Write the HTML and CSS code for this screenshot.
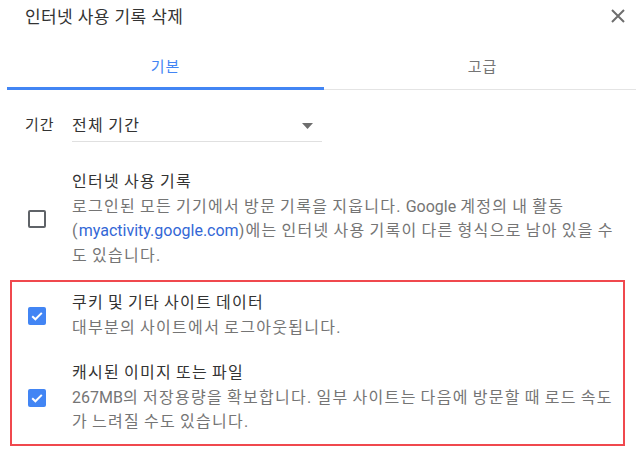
FILE: index.html
```html
<!DOCTYPE html>
<html lang="ko">
<head>
<meta charset="utf-8">
<title>인터넷 사용 기록 삭제</title>
<link rel="stylesheet" href="styles.css">
</head>
<body>
<div class="dialog">
  <header class="head">
    <h1 class="title">인터넷 사용 기록 삭제</h1>
    <button class="close" aria-label="닫기">
      <svg width="14" height="14" viewBox="0 0 14 14"><path d="M1 1L13 13M13 1L1 13" stroke="#6e6e6e" stroke-width="2" fill="none"/></svg>
    </button>
  </header>
  <nav class="tabs">
    <div class="tab active">기본</div>
    <div class="tab">고급</div>
  </nav>
  <div class="period">
    <span class="label">기간</span>
    <div class="select">
      <span class="value">전체 기간</span>
      <svg width="11" height="6" viewBox="0 0 11 6"><path d="M0 0H11L5.5 6Z" fill="#6e6e6e"/></svg>
    </div>
  </div>
  <div class="item item-plain">
    <span class="box"></span>
    <div class="text">
      <div class="name">인터넷 사용 기록</div>
      <div class="desc">로그인된 모든 기기에서 방문 기록을 지웁니다. <span class="lat">Google</span> 계정의 내 활동 (<a class="link lat">myactivity.google.com</a>)에는 인터넷 사용 기록이 다른 형식으로 남아 있을 수 도 있습니다.</div>
    </div>
  </div>
  <div class="highlight">
    <div class="item">
      <span class="box checked"><svg width="18" height="18" viewBox="0 0 18 18"><path d="M4.2 9.2L7.4 12.3L13.8 5.9" stroke="#fff" stroke-width="2" fill="none"/></svg></span>
      <div class="text">
        <div class="name">쿠키 및 기타 사이트 데이터</div>
        <div class="desc">대부분의 사이트에서 로그아웃됩니다.</div>
      </div>
    </div>
    <div class="item">
      <span class="box checked"><svg width="18" height="18" viewBox="0 0 18 18"><path d="M4.2 9.2L7.4 12.3L13.8 5.9" stroke="#fff" stroke-width="2" fill="none"/></svg></span>
      <div class="text">
        <div class="name">캐시된 이미지 또는 파일</div>
        <div class="desc"><span class="lat">267MB</span>의 저장용량을 확보합니다. 일부 사이트는 다음에 방문할 때 로드 속도가 느려질 수도 있습니다.</div>
      </div>
    </div>
  </div>
</div>
</body>
</html>
```
FILE: styles.css
```css
html, body {
  margin: 0;
  padding: 0;
  background: #fff;
  overflow: hidden;
}
body {
  font-family: Roboto, "Noto Sans CJK KR", sans-serif;
  color: #333;
  width: 636px;
  height: 450px;
}
.dialog {
  width: 636px;
}
.head {
  height: 34px;
  display: flex;
  align-items: center;
  justify-content: space-between;
  padding: 0 11px 0 25px;
}
.title {
  margin: 0;
  font-size: 17px;
  font-weight: 400;
  line-height: 34px;
  letter-spacing: 0.4px;
  color: #333;
}
.close {
  border: 0;
  background: none;
  padding: 0;
  width: 14px;
  height: 14px;
  display: flex;
  margin-top: -2px;
}
.tabs {
  margin: 6px 0 0 7px;
  height: 50px;
  display: flex;
  background: linear-gradient(to top, #e4e4e4 1px, transparent 1px);
}
.tab {
  flex: 0 0 317px;
  display: flex;
  align-items: center;
  justify-content: center;
  font-size: 15px;
  letter-spacing: 1px;
  color: #757575;
}
.tab.active {
  color: #4285f4;
  box-shadow: inset 0 -3px 0 #4285f4;
}
.period {
  display: flex;
  align-items: flex-start;
  padding: 20px 0 0 25px;
}
.label {
  width: 47px;
  font-size: 15px;
  line-height: 31px;
  letter-spacing: 1px;
  color: #333;
}
.select {
  width: 250px;
  height: 32px;
  box-sizing: border-box;
  border-bottom: 1px solid #e0e0e0;
  display: flex;
  align-items: center;
  justify-content: space-between;
  padding-right: 9px;
  font-size: 16px;
  color: #333;
}
.value {
  line-height: 31px;
  letter-spacing: 1.4px;
  word-spacing: -1.4px;
}
.item {
  display: flex;
  align-items: center;
  gap: 26px;
}
.item-plain {
  margin: 28px 13px 12px 28px;
}
.box {
  flex: 0 0 18px;
  width: 18px;
  height: 18px;
  box-sizing: border-box;
  border: 2px solid #5f6368;
  border-radius: 2px;
  display: flex;
  align-items: center;
  justify-content: center;
}
.box.checked {
  border: 0;
  background: #4285f4;
}
.text {
  flex: 1;
  font-size: 16px;
  line-height: 24.5px;
  letter-spacing: 1.3px;
  word-spacing: -1.3px;
}
.lat {
  letter-spacing: 0;
}
.name {
  color: #333;
}
.desc {
  color: #757575;
}
.link {
  color: #3367d6;
  text-decoration: none;
}
.highlight {
  margin: 0 11px 0 10px;
  border: 2px solid #f0484e;
  padding: 9px 0 9px 16px;
  display: flex;
  flex-direction: column;
  gap: 21px;
}
.highlight .item {
  margin-right: -1px;
}
```
